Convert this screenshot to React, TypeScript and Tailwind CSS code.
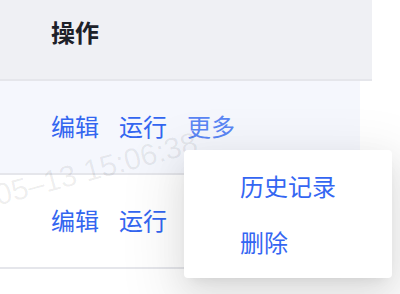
import React from "react";

const cjk = "font-['Noto_Sans_CJK_SC','Noto_Sans',sans-serif]";

export default function App() {
  return (
    <div className={`relative w-[400px] h-[294px] overflow-hidden bg-white ${cjk}`}>
      <div className="flex flex-col">
        <div className="w-[372px] h-[81px] bg-[#eff0f4] border-b-2 border-[#e5e6eb] pl-[51px] pt-[20px]">
          <span className="text-[24px] leading-[24px] font-bold text-[#1d2129]">操作</span>
        </div>
        <div className="w-[360px] h-[94px] bg-[#f5f7fd] border-b-2 border-[#e5e6eb] flex items-center gap-[20px] pl-[51px] text-[24px] leading-[24px] pb-[2px]">
          <span className="text-[#3366f0]">编辑</span>
          <span className="text-[#3366f0]">运行</span>
          <span className="text-[#5a86f4]">更多</span>
        </div>
        <div className="w-[372px] h-[94px] bg-white border-b-2 border-[#e5e6eb] flex items-center gap-[20px] pl-[51px] text-[24px] leading-[24px] pb-[2px]">
          <span className="text-[#3366f0]">编辑</span>
          <span className="text-[#3366f0]">运行</span>
          <span className="text-[#3366f0]">更多</span>
        </div>
      </div>

      <span className="pointer-events-none absolute left-[-89px] top-[203px] origin-top-left rotate-[-15deg] whitespace-nowrap font-['Liberation_Sans',sans-serif] text-[30px] leading-[30px] text-[rgba(0,0,0,0.07)]">
        2023–05–13 15:06:38
      </span>

      <div className="absolute left-[184px] top-[150px] w-[208px] py-2 bg-white rounded-[4px] shadow-[0_12px_32px_0_rgba(0,0,0,0.08),0_6px_12px_-8px_rgba(0,0,0,0.12),0_18px_56px_16px_rgba(0,0,0,0.07)]">
        <div className="h-[56px] flex items-center pl-[56px] text-[24px] leading-[24px] text-[#3466f2]">历史记录</div>
        <div className="h-[56px] flex items-center pl-[56px] text-[24px] leading-[24px] text-[#3466f2]">删除</div>
      </div>
    </div>
  );
}
